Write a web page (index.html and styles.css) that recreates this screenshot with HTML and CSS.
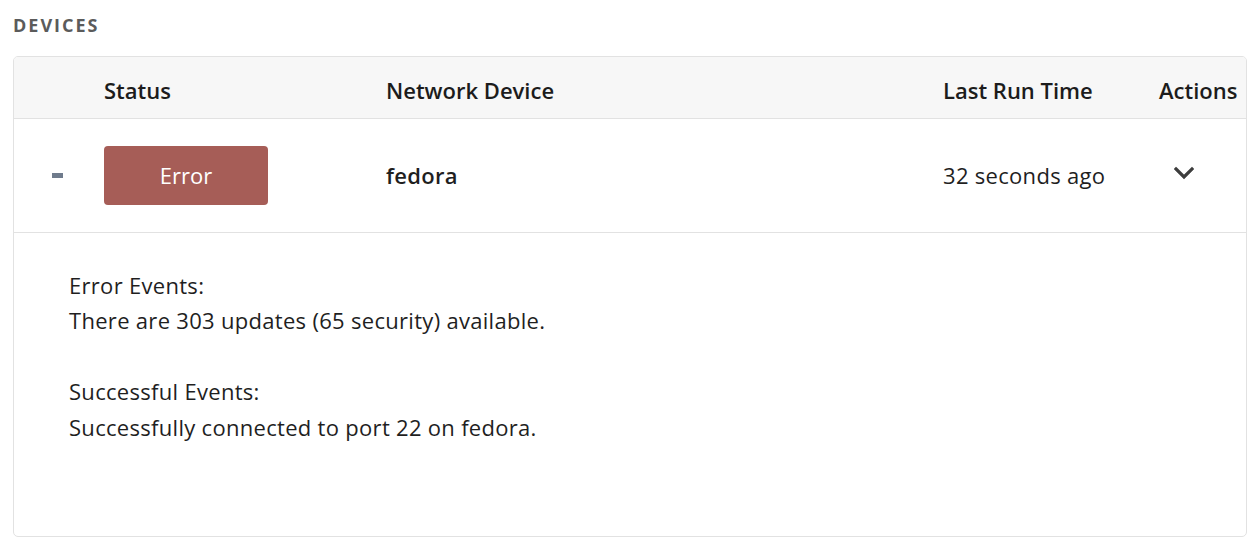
FILE: index.html
```html
<!DOCTYPE html>
<html lang="en">
<head>
  <meta charset="UTF-8">
  <title>Devices</title>
  <link rel="stylesheet" href="styles.css">
</head>
<body>
  <div class="section">
    <h4 class="section-title">DEVICES</h4>

    <div class="device-card">
      <table class="device-table">
        <colgroup>
          <col class="col-toggle">
          <col class="col-status">
          <col class="col-device">
          <col class="col-time">
          <col class="col-actions">
        </colgroup>
        <thead>
          <tr>
            <th></th>
            <th>Status</th>
            <th>Network Device</th>
            <th>Last Run Time</th>
            <th>Actions</th>
          </tr>
        </thead>
        <tbody>
          <tr class="device-row">
            <td><span class="collapse-dash"></span></td>
            <td><span class="status-badge error">Error</span></td>
            <td class="device-name">fedora</td>
            <td>32 seconds ago</td>
            <td>
              <button class="action-toggle" aria-label="Actions">
                <svg width="20" height="14" viewBox="0 0 20 14">
                  <path d="M2 3 L10 11 L18 3" fill="none" stroke="#3d3d3d" stroke-width="3.2" stroke-linecap="square"/>
                </svg>
              </button>
            </td>
          </tr>
          <tr class="detail-row">
            <td colspan="5">
              <div class="events">
                <p>Error Events:</p>
                <p>There are 303 updates (65 security) available.</p>
                <p class="spacer"></p>
                <p>Successful Events:</p>
                <p>Successfully connected to port 22 on fedora.</p>
              </div>
            </td>
          </tr>
        </tbody>
      </table>
    </div>
  </div>
</body>
</html>
```

FILE: styles.css
```css
* {
  margin: 0;
  padding: 0;
  box-sizing: border-box;
}

body {
  background: #fff;
  color: #1f1f1f;
  font-family: 'Open Sans', 'Noto Sans', sans-serif;
}

.section {
  padding: 13px 5px 8px 13px;
}

.section-title {
  font-size: 18px;
  font-weight: 700;
  letter-spacing: 2px;
  color: #5b5b5b;
  line-height: 24px;
  margin-bottom: 19px;
}

.device-card {
  border: 1px solid #e2e2e2;
  border-radius: 5px;
  overflow: hidden;
  width: 1234px;
}

.device-table {
  width: 100%;
  border-collapse: collapse;
  table-layout: fixed;
  font-size: 22px;
}

.col-toggle { width: 90px; }
.col-status { width: 282px; }
.col-device { width: 557px; }
.col-time { width: 216px; }
.col-actions { width: 87px; }

.device-table th {
  background: #f7f7f7;
  text-align: left;
  font-weight: 600;
  height: 61px;
  padding-top: 6px;
  border-bottom: 1px solid #e2e2e2;
  color: #1c1c1c;
  white-space: nowrap;
}

.device-table td {
  vertical-align: middle;
  letter-spacing: 0.3px;
  white-space: nowrap;
}

.device-row td {
  height: 114px;
  border-bottom: 1px solid #e2e2e2;
}

.collapse-dash {
  display: block;
  width: 11px;
  height: 5px;
  margin-left: 38px;
  background: #6f7b8c;
}

.status-badge {
  display: inline-block;
  width: 164px;
  height: 59px;
  line-height: 59px;
  text-align: center;
  border-radius: 4px;
  color: #fff;
  letter-spacing: 0;
}

.status-badge.error {
  background: #a65d57;
}

.device-name {
  font-weight: 600;
}

.action-toggle {
  border: none;
  background: none;
  margin-left: 15px;
  display: block;
  margin-top: -2px;
  cursor: pointer;
}

.events {
  padding: 35px 55px 91px;
  line-height: 35.5px;
}

.events .spacer {
  height: 35.5px;
}
```
